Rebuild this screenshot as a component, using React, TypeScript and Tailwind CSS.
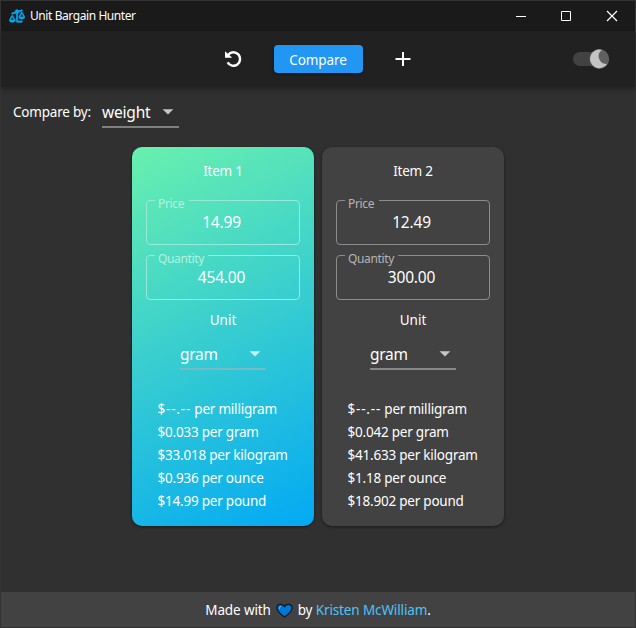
import React from "react";
import { FaScaleUnbalanced } from "react-icons/fa6";

function Caret({ className }: { className: string }) {
  return (
    <svg className={className} width="12" height="6" viewBox="0 0 12 6">
      <path d="M0.5 0.3h10.8L6 5.5z" fill="currentColor" />
    </svg>
  );
}

type FieldProps = { label: string; value: string; gap: string; labelTone: string; border: string; tracking: string };

function Field({ label, value, gap, labelTone, border, tracking }: FieldProps) {
  return (
    <div className="relative h-[45px] w-[154px]">
      <fieldset className={`h-[45px] rounded-[4px] border pl-[8px] ${border}`}>
        <legend className={`h-px ${gap}`} />
        <div className="-ml-[11px] pt-[10px] text-center text-[15.5px] leading-[22px] tracking-[-0.2px]">
          <span>{value}</span>
        </div>
      </fieldset>
      <span className={`absolute left-[12px] top-[-4px] text-[12px] leading-[16px] ${labelTone} ${tracking}`}>{label}</span>
    </div>
  );
}

type Rate = { amount: string; unit: string };
type Item = { name: string; price: string; quantity: string; best: boolean; rates: Rate[] };

const items: Item[] = [
  {
    name: "Item 1",
    price: "14.99",
    quantity: "454.00",
    best: true,
    rates: [
      { amount: "$--.--", unit: "milligram" },
      { amount: "$0.033", unit: "gram" },
      { amount: "$33.018", unit: "kilogram" },
      { amount: "$0.936", unit: "ounce" },
      { amount: "$14.99", unit: "pound" },
    ],
  },
  {
    name: "Item 2",
    price: "12.49",
    quantity: "300.00",
    best: false,
    rates: [
      { amount: "$--.--", unit: "milligram" },
      { amount: "$0.042", unit: "gram" },
      { amount: "$41.633", unit: "kilogram" },
      { amount: "$1.18", unit: "ounce" },
      { amount: "$18.902", unit: "pound" },
    ],
  },
];

function Card({ item }: { item: Item }) {
  const labelTone = item.best ? "text-[#b4f2e0]" : "text-[#b5b5b5]";
  const border = item.best ? "border-[#96eadb]" : "border-[#8c8c8c]";
  return (
    <section
      className={`flex h-[379px] w-[182px] flex-col items-center rounded-[10px] shadow-[0_1px_3px_rgba(0,0,0,0.5)] ${
        item.best ? "bg-[linear-gradient(154.35deg,#69f0ae,#03a9f4)]" : "bg-[#424242]"
      }`}
    >
      <h2 className="mt-[14px] text-[13.5px] leading-5 tracking-[-0.2px]">{item.name}</h2>
      <div className="mt-[19px] flex flex-col gap-[10px]">
        <Field label="Price" value={item.price} gap="w-[34px]" labelTone={labelTone} border={border} tracking="tracking-[-0.35px]" />
        <Field label="Quantity" value={item.quantity} gap="w-[53px]" labelTone={labelTone} border={border} tracking="tracking-[-0.35px]" />
      </div>
      <div className="mt-[10px] text-[13.5px] leading-5">Unit</div>
      <div className={`mt-[12px] flex h-[28px] w-[86px] justify-between border-b-2 ${item.best ? "border-[#79b9c4]" : "border-[#888888]"}`}>
        <span className="text-[15.5px] leading-6 tracking-[-0.3px]">gram</span>
        <Caret className={`mr-[5px] mt-[9px] ${item.best ? "text-[#c4eff4]" : "text-[#c6c6c6]"}`} />
      </div>
      <ul className="mt-[28px] ml-[25.5px] self-start text-[13.5px] leading-[23px] tracking-[-0.22px]">
        {item.rates.map(({ amount, unit }) => (
          <li key={unit} className="whitespace-nowrap">
            <span className={amount.includes("--") ? "tracking-[0.8px]" : ""}>{amount}</span> per {unit}
          </li>
        ))}
      </ul>
    </section>
  );
}

export default function App() {
  return (
    <div className="flex h-[628px] w-[636px] flex-col border border-[#333333] bg-[#303030] font-['Noto_Sans',sans-serif] text-white">
      <header className="flex h-[30px] shrink-0 items-center bg-[#1a1a1a]">
        <FaScaleUnbalanced className="ml-[8px] h-[14px] w-[16px] text-[#03a9f4]" stroke="#03a9f4" strokeWidth="14" />
        <span className="ml-[5px] text-[12px] tracking-[-0.42px]">Unit Bargain Hunter</span>
        <svg className="ml-auto mr-[16px]" width="104" height="12" viewBox="0 0 104 12" fill="none" stroke="white">
          <path d="M1 6.5h10" />
          <path d="M46.5 1.5h9v9h-9z" />
          <path d="M92 1l10 10M102 1L92 11" strokeWidth="1.2" />
        </svg>
      </header>
      <nav className="relative flex h-[56px] shrink-0 items-center bg-[#212121] shadow-[0_2px_5px_rgba(0,0,0,0.35)]">
        <svg className="ml-[224px]" width="17" height="18" viewBox="0 0 17 18" fill="none">
          <path d="M3.300 4.700A6.700 6.700 0 1 1 2.600 12.400" stroke="white" strokeWidth="2.5" />
          <path d="M0 1.200L0 7.700H7.300z" fill="white" />
        </svg>
        <button className="ml-[31.5px] h-[28px] w-[89px] rounded-[4px] bg-[#2196f3] pt-[2px] text-[13.5px] leading-5 tracking-[-0.1px] shadow-[0_1px_3px_rgba(0,0,0,0.5)]">Compare</button>
        <svg className="ml-[32px]" width="16" height="16" viewBox="0 0 16 16" stroke="white" strokeWidth="2">
          <path d="M8 1v14M0.5 8h15" />
        </svg>
        <div className="ml-auto mr-[25px]">
          <svg width="38" height="22" viewBox="0 0 38 22">
            <rect x="1" y="4" width="34" height="14" rx="7" fill="#424242" />
            <circle cx="27.3" cy="11" r="9.9" fill="#606060" />
            <path d="M30 2A7.600 7.600 0 0 0 35.300 15.800A9.300 9.300 0 1 1 30 2z" fill="#c4c4c4" />
          </svg>
        </div>
      </nav>
      <main className="flex-1">
        <div className="flex h-[60px] pl-[12px] pt-[11px]">
          <span className="mt-[4px] w-[79px] whitespace-nowrap text-[13.5px] leading-5 tracking-[-0.2px]">Compare by:</span>
          <div className="ml-[10px] flex h-[30px] w-[77px] justify-between border-b-2 border-[#808080]">
            <span className="text-[15.5px] leading-[28px] tracking-[-0.2px]">weight</span>
            <Caret className="mr-[5px] mt-[11px] text-[#c6c6c6]" />
          </div>
        </div>
        <div className="flex justify-center gap-[8px]">
          {items.map((item) => (
            <Card key={item.name} item={item} />
          ))}
        </div>
      </main>
      <footer className="flex h-[35px] shrink-0 items-center justify-center bg-[#424242] pt-px text-[13.5px] tracking-[-0.13px]">
        <span>Made with</span>
        <svg className="mx-[5px]" width="17" height="15" viewBox="0 0 17 15">
          <path d="M8.5 14C5 11.5 1 8.500 1 5C1 1 6 0 8.500 3.500C11 0 16 1 16 5C16 8.500 12 11.500 8.500 14z" fill="#0078d7" stroke="#101820" strokeWidth="1.3" />
          <path d="M3.500 6C3.200 4.500 4 3.500 5 3.400" stroke="#55aaf0" fill="none" strokeWidth="1.2" />
        </svg>
        <span>by <a className="text-[#4fc3f7]">Kristen McWilliam</a>.</span>
      </footer>
    </div>
  );
}
